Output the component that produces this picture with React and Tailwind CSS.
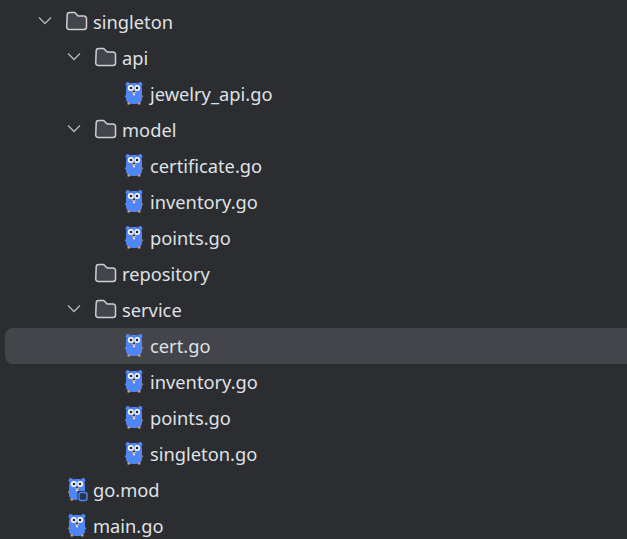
import React from "react";

const rows = [
  { name: "singleton", type: "folder", level: 0, open: true },
  { name: "api", type: "folder", level: 1, open: true },
  { name: "jewelry_api.go", type: "go", level: 2 },
  { name: "model", type: "folder", level: 1, open: true },
  { name: "certificate.go", type: "go", level: 2 },
  { name: "inventory.go", type: "go", level: 2 },
  { name: "points.go", type: "go", level: 2 },
  { name: "repository", type: "folder", level: 1 },
  { name: "service", type: "folder", level: 1, open: true },
  { name: "cert.go", type: "go", level: 2, selected: true },
  { name: "inventory.go", type: "go", level: 2 },
  { name: "points.go", type: "go", level: 2 },
  { name: "singleton.go", type: "go", level: 2 },
  { name: "go.mod", type: "mod", level: 0 },
  { name: "main.go", type: "go", level: 0 },
];

// left offset of the row content, one per tree level
const indent = {
  folder: ["pl-[32px]", "pl-[61px]"],
  go: ["pl-[61px]", "", "pl-[118px]"],
  mod: ["pl-[61px]"],
};

const Chevron = () => (
  <svg width="16" height="16" viewBox="0 0 16 16" fill="none" className="block shrink-0 -translate-y-px">
    <path d="M2 4.500 L8 10.500 L14 4.500" stroke="#b4b8bf" strokeWidth="1.300" />
  </svg>
);

const Folder = () => (
  <svg width="24" height="24" viewBox="0 0 24 24" fill="none" className="shrink-0">
    <path
      d="M2.200 5 a2.500 2.500 0 0 1 2.500-2.500 h5 l3.500 3.500 h5.800 a2.500 2.500 0 0 1 2.500 2.500 v8.500 a2.500 2.500 0 0 1-2.500 2.500 h-14.800 a2.500 2.500 0 0 1-2.500-2.500 Z"
      fill="#43454a"
      stroke="#ced0d6"
      strokeWidth="1.500"
    />
  </svg>
);

const Gopher = ({ mod }) => (
  <svg width="22" height="24" viewBox="0 0 22 24" className="shrink-0">
    <path d="M1.500 14.200 L5 12 V16 Z M20.500 14.200 L17 12 V16 Z" fill="#c8a488" />
    <circle cx="4.800" cy="2.300" r="2.200" fill="#4f85f5" />
    <circle cx="17.200" cy="2.300" r="2.200" fill="#4f85f5" />
    <path
      d="M3 7.500 C3 2.800 6.500 1 11 1 C15.500 1 19 2.800 19 7.500 V16.500 C19 20.500 16 22 11 22 C6 22 3 20.500 3 16.500 Z"
      fill="#4f85f5"
    />
    <circle cx="7.800" cy="6" r="3" fill="#f4f5f7" />
    <circle cx="14.200" cy="6" r="3" fill="#f4f5f7" />
    <circle cx="8" cy="6" r="1.300" fill="#20242c" />
    <circle cx="14" cy="6" r="1.300" fill="#20242c" />
    <path d="M9 9.300 h4 v1.500 l-2 1.200 l-2 -1.200 Z" fill="#c8a488" />
    <path d="M10.100 9 h1.800 v1.100 h-1.800 Z" fill="#20242c" />
    <path d="M10 11.800 h2 v1.400 h-2 Z" fill="#f4f5f7" />
    <path d="M4.500 20.500 h2.500 v2 h-2.500 Z M15 20.500 h2.500 v2 h-2.500 Z" fill="#c8a488" />
    {mod && <rect x="11.500" y="13" width="11" height="11" fill="#2b2d30" />}
    {mod && <rect x="13" y="14.500" width="8" height="8" rx="2" fill="#26364f" stroke="#4f85f5" strokeWidth="1.400" />}
  </svg>
);

const Row = ({ row }) => {
  const pad = indent[row.type][row.level];
  return (
    <div
      className={`flex h-9 items-center ml-[5px] ${pad} ${row.selected ? "bg-[#43454a] rounded-l-lg" : ""}`}
    >
      {row.type === "folder" ? (
        <>
          <span className="w-[28px] shrink-0">{row.open && <Chevron />}</span>
          <Folder />
          <span className="ml-[4px]">{row.name}</span>
        </>
      ) : (
        <>
          <Gopher mod={row.type === "mod"} />
          <span className="ml-[5px]">{row.name}</span>
        </>
      )}
    </div>
  );
};

export default function App() {
  return (
    <div className="h-[539px] w-[627px] overflow-hidden bg-[#2b2d30] pt-[4px] text-[18.300px] text-[#dfe1e5] font-['Noto_Sans',sans-serif]">
      {rows.map((row, i) => (
        <Row key={i} row={row} />
      ))}
    </div>
  );
}
